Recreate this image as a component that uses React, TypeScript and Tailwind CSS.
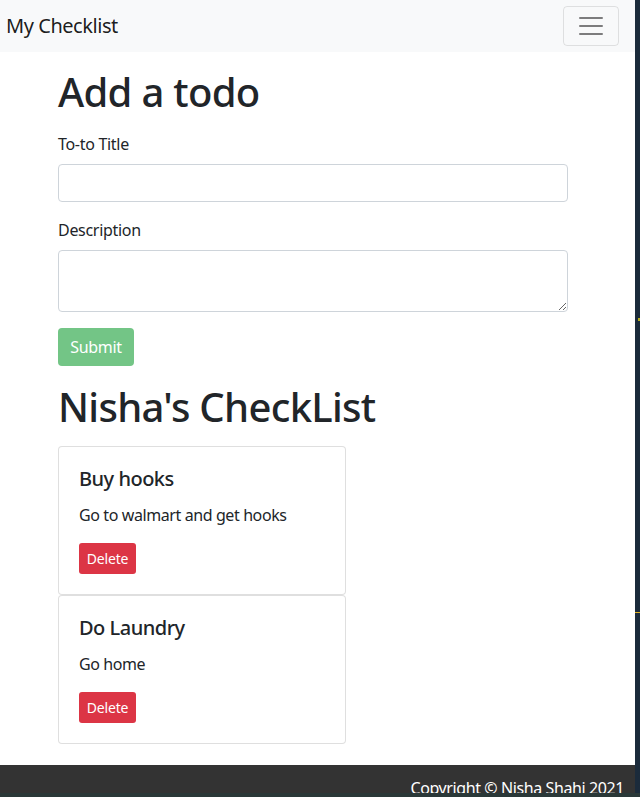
import React from "react";

const font = { fontFamily: '"Noto Sans", "Segoe UI", Roboto, sans-serif' };

function Card({ title, text }: { title: string; text: string }) {
  return (
    <div className="w-[288px] border border-[rgba(0,0,0,0.125)] rounded-[4px] bg-white">
      <div className="p-5">
        <h5 className="text-[20px] leading-[24px] font-medium tracking-[-0.5px] text-[#212529] mb-3">{title}</h5>
        <p className="text-[16px] leading-[24px] tracking-[-0.4px] text-[#212529] mb-4">{text}</p>
        <button className="h-[31px] w-[57px] text-[14px] leading-[21px] tracking-[-0.2px] text-white bg-[#dc3545] rounded-[3px]">
          Delete
        </button>
      </div>
    </div>
  );
}

export default function App() {
  return (
    <div style={font} className="h-[797px] w-[640px] overflow-hidden bg-[#2a3838] flex flex-col">
      <div className="flex h-[793px]">
        <div className="w-[635px] h-[793px] overflow-hidden bg-white flex flex-col">
          <nav className="h-[52px] bg-[#f8f9fa] flex items-center justify-between pl-[6px] pr-[16px] shrink-0">
            <span className="text-[20px] leading-[30px] tracking-[-0.45px] text-[rgba(0,0,0,0.9)]">My Checklist</span>
            <button className="w-[56px] h-[40px] border border-[rgba(0,0,0,0.1)] rounded-[4px] flex items-center justify-center">
              <svg width="30" height="30" viewBox="0 0 30 30">
                <path d="M4 7h22M4 15h22M4 23h22" stroke="rgba(0,0,0,0.5)" strokeWidth="2" strokeLinecap="round" />
              </svg>
            </button>
          </nav>
          <div className="pl-[58px] pr-[67px] pt-[16px] text-[#212529]">
            <h1 className="text-[40px] leading-[48px] font-medium tracking-[-0.7px] mb-4">Add a todo</h1>
            <form className="tracking-[-0.3px]">
              <div className="mb-4">
                <label className="block text-[16px] leading-[24px] mb-2">To-to Title</label>
                <input className="block w-full h-[38px] border border-[#ced4da] rounded-[4px] px-3" />
              </div>
              <div className="mb-4">
                <label className="block text-[16px] leading-[24px] mb-2">Description</label>
                <textarea rows={2} className="block w-full h-[62px] border border-[#ced4da] rounded-[4px] px-3 py-[6px]" />
              </div>
              <button type="button" className="h-[38px] w-[76px] text-[16px] leading-[24px] text-white bg-[#73c586] rounded-[4px]">
                Submit
              </button>
            </form>
            <h1 className="text-[40px] leading-[48px] font-medium tracking-[-0.7px] mt-[17px] mb-[15px]">Nisha's CheckList</h1>
            <div className="flex flex-col">
              <Card title="Buy hooks" text="Go to walmart and get hooks" />
              <Card title="Do Laundry" text="Go home" />
            </div>
          </div>
          <footer className="mt-[21px] h-[40px] bg-[#333333] text-white flex justify-end pr-[11px] pt-[11px] shrink-0">
            <span className="text-[16px] leading-[24px] tracking-[-0.4px]">Copyright © Nisha Shahi 2021</span>
          </footer>
        </div>
        <div className="w-[5px] bg-[#1b2b3b] flex flex-col">
          <div className="h-[318px]" />
          <div className="ml-[3px] w-[2px] h-[3px] bg-[#b8b020]" />
          <div className="h-[291px]" />
          <div className="w-[5px] h-[1px] bg-[#e0b020]" />
        </div>
      </div>
      <div className="h-[4px] bg-[#2a3838]" />
    </div>
  );
}
